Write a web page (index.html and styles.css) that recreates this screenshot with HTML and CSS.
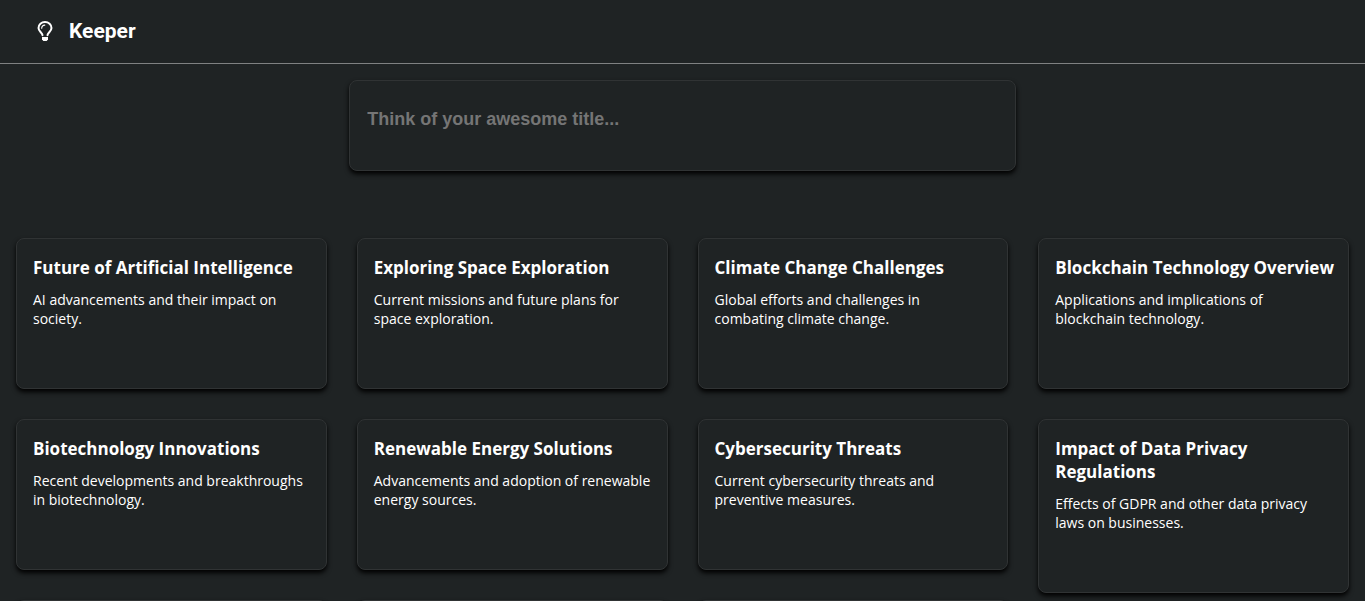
FILE: index.html
```html
<!DOCTYPE html>
<html lang="en">
<head>
<meta charset="utf-8">
<title>Keeper</title>
<link rel="stylesheet" href="styles.css">
</head>
<body>
<header class="header">
  <svg class="logo" viewBox="0 0 16 20" aria-hidden="true">
    <path class="bulb" d="M5.500 14.200C5.300 11.700 1.500 10.400 1.500 7a6.500 6 0 0 1 13 0c0 3.400-3.800 4.700-4 7.200"/>
    <path class="glint" d="M4.700 7.200c0-2 1.300-3.100 3.100-3.100"/>
    <path class="base" d="M5 16h6v2.200L9.700 20H6.300L5 18.200z"/>
  </svg>
  <h1 class="brand">Keeper</h1>
</header>
<main class="page">
  <form class="composer">
    <input class="composer-title" type="text" aria-label="Title" placeholder="Think of your awesome title...">
  </form>
  <section class="notes" aria-label="Notes">
    <div class="column">
      <article class="note"><h2>Future of Artificial Intelligence</h2><p>AI advancements and their impact on society.</p></article>
      <article class="note"><h2>Biotechnology Innovations</h2><p>Recent developments and breakthroughs in biotechnology.</p></article>
      <article class="note"></article>
    </div>
    <div class="column">
      <article class="note"><h2>Exploring Space Exploration</h2><p>Current missions and future plans for space exploration.</p></article>
      <article class="note"><h2>Renewable Energy Solutions</h2><p>Advancements and adoption of renewable energy sources.</p></article>
      <article class="note"></article>
    </div>
    <div class="column">
      <article class="note"><h2>Climate Change Challenges</h2><p>Global efforts and challenges in combating climate change.</p></article>
      <article class="note"><h2>Cybersecurity Threats</h2><p>Current cybersecurity threats and preventive measures.</p></article>
      <article class="note"></article>
    </div>
    <div class="column">
      <article class="note"><h2>Blockchain Technology Overview</h2><p>Applications and implications of blockchain technology.</p></article>
      <article class="note"><h2>Impact of Data Privacy Regulations</h2><p>Effects of GDPR and other data privacy laws on businesses.</p></article>
    </div>
  </section>
</main>
</body>
</html>
```
FILE: styles.css
```css
* { box-sizing: border-box; }
body {
  display: flex;
  flex-direction: column;
  margin: 0;
  height: 100vh;
  background: #1f2324;
  color: #fff;
  font-family: "Segoe UI", "Open Sans", "Noto Sans", sans-serif;
}
.header {
  flex: none;
  display: flex;
  align-items: center;
  gap: 16px;
  padding: 19px 37px 20px;
  border-bottom: 1px solid #7f8182;
}
.page { flex: 1; min-height: 0; overflow: hidden; }
.logo { width: 16px; height: 20px; }
.bulb, .glint { fill: none; stroke: #fff; stroke-linecap: round; stroke-linejoin: round; }
.bulb { stroke-width: 2; }
.glint { stroke-width: 1.2; }
.base { fill: #fff; }
.brand {
  margin: 0;
  font: 700 21px/24px Roboto, sans-serif;
}
.composer {
  width: calc(50% - 16px);
  margin: 16px auto 67px;
  padding: 18px 16px 30px;
}
.composer, .note {
  border: 1px solid #303334;
  border-radius: 8px;
  background: #1f2324;
  box-shadow: 0 3px 5px #000;
}
.composer-title {
  display: block;
  width: 100%;
  height: 41px;
  padding: 0 1px;
  border: 0;
  outline: 0;
  background: transparent;
  color: #fff;
  font: 700 18px/24px Arial, "Liberation Sans", sans-serif;
}
.composer-title::placeholder { color: #757575; opacity: 1; }
.notes {
  display: grid;
  grid-template-columns: repeat(4, minmax(0, 1fr));
  gap: 30px;
  padding: 0 16px;
}
.column { display: flex; flex-direction: column; gap: 30px; }
.note { min-height: 151px; padding: 17px 8px 60px 16px; }
.note h2 { margin: 0 0 11px; font-size: 17px; line-height: 23px; font-weight: 700; }
.note p { margin: 0; padding-right: 7px; font-size: 14px; line-height: 19px; }
```
